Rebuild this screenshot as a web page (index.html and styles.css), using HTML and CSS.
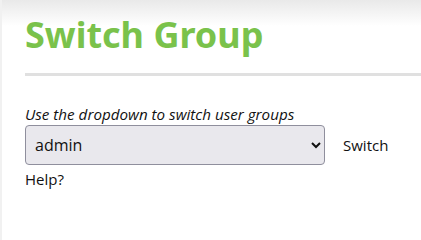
FILE: index.html
```html
<!DOCTYPE html>
<html lang="en">

<head>
    <meta charset="UTF-8">
    <meta name="viewport" content="width=device-width, initial-scale=1.0">
    <title>Switch Group</title>
    <link rel="stylesheet" href="styles.css">
</head>

<body>
    <div class="page">
        <h1 class="title">Switch Group</h1>
        <hr class="rule">

        <form class="switch-form">
            <label class="hint" for="group">Use the dropdown to switch user groups</label>
            <div class="row">
                <select id="group" class="group-select">
                    <option>admin</option>
                    <option>user</option>
                </select>
                <a class="switch-link" href="#">Switch</a>
            </div>
            <a class="help" href="#">Help?</a>
        </form>
    </div>
</body>

</html>
```

FILE: styles.css
```css
* {
    margin: 0;
    padding: 0;
    box-sizing: border-box;
}

body {
    font-family: "Open Sans", "Noto Sans", sans-serif;
    background-color: #fff;
    color: #111;
}

.page {
    min-height: 240px;
    padding: 10px 0 0 23px;
    background: linear-gradient(to bottom, #e9e9e9 0, #fff 26px);
    border-left: 2px solid #f1f1f1;
}

.title {
    font-family: "Noto Sans", sans-serif;
    font-size: 36px;
    font-weight: 700;
    color: #7ac24b;
    line-height: 50px;
}

.rule {
    border: none;
    height: 3px;
    background-color: #e0e0e0;
    margin-top: 13px;
}

.switch-form {
    margin-top: 28px;
}

.hint {
    display: block;
    font-style: italic;
    font-size: 15.2px;
    line-height: 20px;
}

.row {
    display: flex;
    align-items: center;
    margin-top: 1px;
}

.group-select {
    width: 300px;
    height: 40px;
    padding: 0 5px;
    font-family: inherit;
    font-size: 16px;
    color: #111;
    background-color: #e9e8ed;
    border: 1px solid #8f8f9d;
    border-radius: 4px;
}

.switch-link {
    margin-left: 18px;
    font-size: 15px;
    color: #111;
    text-decoration: none;
}

.help {
    display: block;
    margin-top: 4px;
    font-size: 15px;
    color: #111;
    text-decoration: none;
}
```
